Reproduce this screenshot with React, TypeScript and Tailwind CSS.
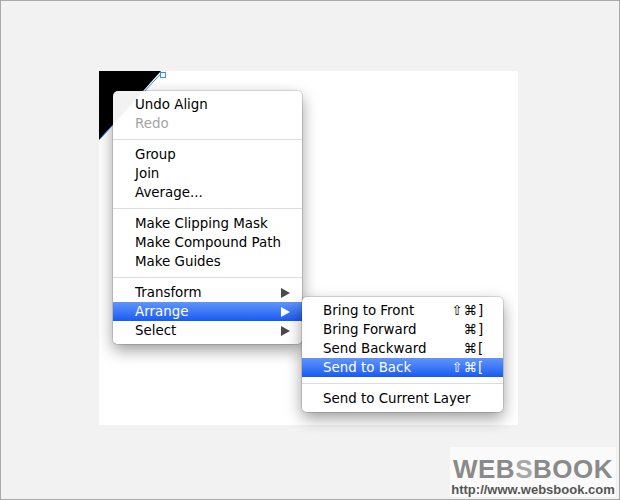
import React from "react";

type Item =
  | { kind: "sep" }
  | {
      kind: "item";
      label: string;
      disabled?: boolean;
      active?: boolean;
      arrow?: boolean;
      mods?: string;
      key?: string;
    };

const mainItems: Item[] = [
  { kind: "item", label: "Undo Align" },
  { kind: "item", label: "Redo", disabled: true },
  { kind: "sep" },
  { kind: "item", label: "Group" },
  { kind: "item", label: "Join" },
  { kind: "item", label: "Average..." },
  { kind: "sep" },
  { kind: "item", label: "Make Clipping Mask" },
  { kind: "item", label: "Make Compound Path" },
  { kind: "item", label: "Make Guides" },
  { kind: "sep" },
  { kind: "item", label: "Transform", arrow: true },
  { kind: "item", label: "Arrange", arrow: true, active: true },
  { kind: "item", label: "Select", arrow: true },
];

const subItems: Item[] = [
  { kind: "item", label: "Bring to Front", mods: "⇧⌘", key: "]" },
  { kind: "item", label: "Bring Forward", mods: "⌘", key: "]" },
  { kind: "item", label: "Send Backward", mods: "⌘", key: "[" },
  { kind: "item", label: "Send to Back", mods: "⇧⌘", key: "[", active: true },
  { kind: "sep" },
  { kind: "item", label: "Send to Current Layer" },
];

function Arrow({ white }: { white?: boolean }) {
  return (
    <svg width="9" height="10" viewBox="0 0 9 10" className="shrink-0">
      <polygon points="0,0 9,5 0,10" fill={white ? "#ffffff" : "#4a4a4a"} />
    </svg>
  );
}

function MenuRows({ items, left }: { items: Item[]; left: string }) {
  return (
    <>
      {items.map((it, i) =>
        it.kind === "sep" ? (
          <div key={i} className="h-[12px] flex items-center">
            <div className="h-px w-full bg-[#dcdcdc]" />
          </div>
        ) : (
          <div
            key={i}
            className={`h-[19px] flex items-center ${left} pr-[12px] ${
              it.active
                ? "bg-gradient-to-b from-[#6194f9] to-[#1859f2] text-white"
                : it.disabled
                ? "text-[#a3a3a3]"
                : "text-black"
            }`}
          >
            <span className="flex-1 whitespace-nowrap">{it.label}</span>
            {it.arrow && <Arrow white={it.active} />}
            {it.key && (
              <span className="flex items-center pr-[6px]">
                <span className="text-right tracking-[1px]">{it.mods}</span>
                <span className="w-[7px]">{it.key}</span>
              </span>
            )}
          </div>
        )
      )}
    </>
  );
}

export default function App() {
  return (
    <div
      className="relative w-[620px] h-[500px] bg-[#f2f2f2] border border-[#a9a9a9] overflow-hidden"
      style={{ fontFamily: '"DejaVu Sans", sans-serif' }}
    >
      <div className="ml-[98px] mt-[70px] w-[419px] h-[354px] bg-white relative text-[13.4px] leading-none">
        <svg width="80" height="80" className="absolute left-0 top-0">
          <polygon points="0,0 62,0 0,69" fill="#000" />
          <line x1="62.5" y1="2" x2="0" y2="69" stroke="#3a8ef2" strokeWidth="1" />
          <rect x="61.5" y="1.5" width="5" height="5" fill="#fff" stroke="#3a8ef2" strokeWidth="1" />
        </svg>

        <div className="absolute left-[14px] top-[20px] w-[189px] py-[4px] rounded-[5px] bg-white/95 shadow-[0_0_0_1px_rgba(0,0,0,0.12),0_6px_16px_rgba(0,0,0,0.4)]">
          <MenuRows items={mainItems} left="pl-[22px]" />
        </div>

        <div className="absolute left-[203px] top-[226px] w-[201px] py-[4px] rounded-[5px] bg-white/95 shadow-[0_0_0_1px_rgba(0,0,0,0.12),0_6px_16px_rgba(0,0,0,0.4)]">
          <MenuRows items={subItems} left="pl-[21px]" />
        </div>
      </div>

      <div
        className="absolute left-[449px] top-[446px] w-[166px] h-[50px] bg-[#fafafa] flex flex-col items-center"
        style={{ fontFamily: '"Liberation Sans", Arial, sans-serif' }}
      >
        <div className="text-[26px] font-bold leading-none mt-[9px] tracking-[0.5px] text-[#8a8a8a]">
          WEB<span className="text-[#a8a8a8]">S</span>BOOK
        </div>
        <div className="text-[13px] font-bold leading-none mt-[1px] text-[#555]">
          http://www.websbook.com
        </div>
      </div>
    </div>
  );
}
